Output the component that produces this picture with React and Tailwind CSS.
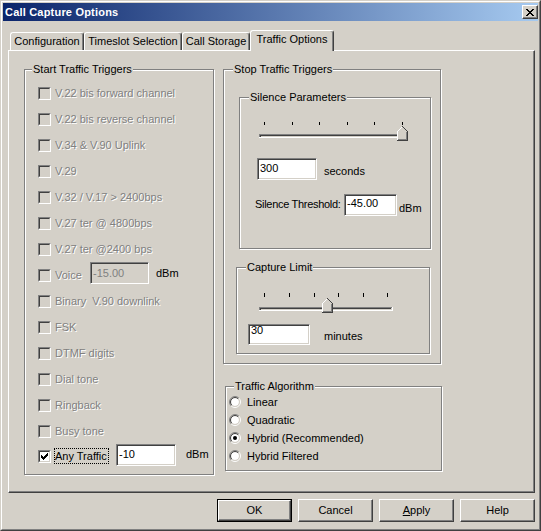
import React from "react";

function Checkbox({ checked, disabled }) {
  return (
    <div className="w-[13px] h-[13px] shrink-0 border border-t-[#808080] border-l-[#808080] border-r-white border-b-white">
      <div
        className={`w-full h-full flex items-center justify-center border border-t-[#404040] border-l-[#404040] border-r-[#d4d0c8] border-b-[#d4d0c8] ${
          disabled ? "bg-[#d4d0c8]" : "bg-white"
        }`}
      >
        {checked && (
          <svg width="7" height="7" className="block" shapeRendering="crispEdges">
            <path
              d="M0 2h1v3H0z M1 3h1v3H1z M2 4h1v3H2z M3 3h1v3H3z M4 2h1v3H4z M5 1h1v3H5z M6 0h1v3H6z"
              fill="#000"
            />
          </svg>
        )}
      </div>
    </div>
  );
}

function Radio({ checked }) {
  const arc = (r) => {
    const d = r * 0.7071;
    return {
      tl: `M${6 - d},${6 + d} A${r},${r} 0 0 1 ${6 + d},${6 - d}`,
      br: `M${6 + d},${6 - d} A${r},${r} 0 0 1 ${6 - d},${6 + d}`,
    };
  };
  const o = arc(5.5);
  const i = arc(4.5);
  return (
    <svg width="12" height="12" className="block shrink-0">
      <circle cx="6" cy="6" r="4" fill="#fff" />
      <path d={o.tl} stroke="#808080" fill="none" />
      <path d={o.br} stroke="#fff" fill="none" />
      <path d={i.tl} stroke="#404040" fill="none" />
      <path d={i.br} stroke="#d4d0c8" fill="none" />
      {checked && <circle cx="6" cy="6" r="2" fill="#000" />}
    </svg>
  );
}

function Field({ className, children }) {
  return (
    <div
      className={`shrink-0 border border-t-[#808080] border-l-[#808080] border-r-white border-b-white shadow-[inset_1px_1px_0_#404040,inset_-1px_-1px_0_#d4d0c8] pl-[2px] whitespace-nowrap ${className}`}
    >
      {children}
    </div>
  );
}

function Group({ label, labelLeft, className, children }) {
  return (
    <div
      className={`relative shrink-0 flex flex-col items-start border border-[#808080] shadow-[inset_1px_1px_0_#fff,1px_1px_0_#fff] ${className}`}
    >
      <span className={`absolute -top-[7px] ${labelLeft} px-[1px] bg-[#d4d0c8] whitespace-nowrap`}>
        {label}
      </span>
      {children}
    </div>
  );
}

function Slider({ ticks, tickY, tickH, x1, x2, cy, cx, ay, height }) {
  return (
    <svg width="160" height={height} className="block shrink-0" shapeRendering="crispEdges">
      {ticks.map((t) => (
        <rect key={t} x={t} y={tickY} width="1" height={tickH} fill="#000" />
      ))}
      <rect x={x1} y={cy} width={x2 - x1} height="1" fill="#808080" />
      <rect x={x1} y={cy} width="1" height="3" fill="#808080" />
      <rect x={x1 + 1} y={cy + 1} width={x2 - x1 - 2} height="1" fill="#404040" />
      <rect x={x1 + 1} y={cy + 1} width="1" height="2" fill="#404040" />
      <rect x={x1} y={cy + 3} width={x2 - x1 + 1} height="1" fill="#fff" />
      <rect x={x2} y={cy} width="1" height="4" fill="#fff" />
      <polygon
        points={`${cx - 5},${ay + 15} ${cx - 5},${ay + 5} ${cx},${ay} ${cx + 6},${ay + 6} ${cx + 6},${ay + 15}`}
        fill="#d4d0c8"
      />
      <polyline
        points={`${cx - 4.5},${ay + 14} ${cx - 4.5},${ay + 5.5} ${cx + 0.5},${ay + 0.5}`}
        fill="none"
        stroke="#fff"
      />
      <polyline
        points={`${cx + 0.5},${ay + 0.5} ${cx + 5.5},${ay + 5.5} ${cx + 5.5},${ay + 14.5} ${cx - 5},${ay + 14.5}`}
        fill="none"
        stroke="#404040"
      />
      <polyline
        points={`${cx + 4.5},${ay + 6} ${cx + 4.5},${ay + 13.5} ${cx - 4},${ay + 13.5}`}
        fill="none"
        stroke="#808080"
      />
    </svg>
  );
}

function Tab({ label, className, selected }) {
  return (
    <div
      className={`shrink-0 text-center whitespace-nowrap pt-[2px] border-t border-l border-r border-t-white border-l-white border-r-[#404040] shadow-[inset_-1px_0_0_#808080] rounded-t-[3px] ${
        selected ? "h-[21px] relative z-10 bg-[#d4d0c8]" : "h-[19px]"
      } ${className}`}
    >
      {label}
    </div>
  );
}

function Btn({ children, def }) {
  const inner = (
    <div className="w-full h-full flex items-center justify-center border border-t-white border-l-white border-r-[#404040] border-b-[#404040] shadow-[inset_-1px_-1px_0_#808080]">
      {children}
    </div>
  );
  return def ? (
    <div className="w-[75px] h-[23px] border border-black">{inner}</div>
  ) : (
    <div className="w-[75px] h-[23px]">{inner}</div>
  );
}

const dis = "ml-[4px] text-[#808080] [text-shadow:1px_1px_0_#ffffff] whitespace-pre";

const simpleRows1 = [
  "V.22 bis forward channel",
  "V.22 bis reverse channel",
  "V.34 & V.90 Uplink",
  "V.29",
  "V.32 / V.17 > 2400bps",
  "V.27 ter @ 4800bps",
  "V.27 ter @2400 bps",
];
const simpleRows2 = ["Binary  V.90 downlink", "FSK", "DTMF digits", "Dial tone", "Ringback", "Busy tone"];

export default function App() {
  return (
    <div className="w-[541px] h-[531px] bg-[#d4d0c8] text-black text-[11px] leading-[13px] font-['Liberation_Sans',Arial,sans-serif] border border-t-[#d4d0c8] border-l-[#d4d0c8] border-r-[#404040] border-b-[#404040]">
      <div className="h-full flex flex-col p-[1px] border border-t-white border-l-white border-r-[#808080] border-b-[#808080]">
        {/* Title bar */}
        <div className="h-[18px] shrink-0 flex items-center justify-between bg-[linear-gradient(to_right,#0a246a,#a6caf0)]">
          <span className="pl-[2px] text-white font-bold text-[11px] tracking-[0.2px]">Call Capture Options</span>
          <div className="w-[16px] h-[14px] flex items-center justify-center bg-[#d4d0c8] border border-t-white border-l-white border-r-[#404040] border-b-[#404040] shadow-[inset_-1px_-1px_0_#808080]">
            <svg width="8" height="7" className="block" shapeRendering="crispEdges">
              <path
                d="M0 0h2v1H0z M6 0h2v1H6z M1 1h2v1H1z M5 1h2v1H5z M2 2h4v1H2z M3 3h2v1H3z M2 4h4v1H2z M1 5h2v1H1z M5 5h2v1H5z M0 6h2v1H0z M6 6h2v1H6z"
                fill="#000"
              />
            </svg>
          </div>
        </div>

        {/* Tabs + panel */}
        <div className="ml-[5px] w-[527px] flex flex-col">
          <div className="mt-[9px] h-[21px] flex items-end pl-[2px]">
            <Tab label="Configuration" className="w-[74px]" />
            <Tab label="Timeslot Selection" className="w-[98px]" />
            <Tab label="Call Storage" className="w-[68px]" />
            <Tab label="Traffic Options" className="w-[84px]" selected />
          </div>
          <div className="-mt-[1px] h-[443px] w-[527px] flex items-start pl-[15px] pt-[18px] border border-t-white border-l-white border-r-[#404040] border-b-[#404040] shadow-[inset_-1px_-1px_0_#808080]">
            {/* Start Traffic Triggers */}
            <Group label="Start Traffic Triggers" labelLeft="left-[7px]" className="w-[190px] h-[406px] pt-[10px] pl-[13px]">
              {simpleRows1.map((t) => (
                <div key={t} className="flex items-center h-[26px]">
                  <Checkbox disabled />
                  <span className={dis}>{t}</span>
                </div>
              ))}
              <div className="flex items-center h-[26px]">
                <Checkbox disabled />
                <span className={`${dis} w-[35px]`}>Voice</span>
                <Field className="self-start w-[59px] h-[22px] pt-[4px] bg-[#d4d0c8] text-[#808080]">-15.00</Field>
                <span className="self-start ml-[7px] mt-[5px]">dBm</span>
              </div>
              {simpleRows2.map((t) => (
                <div key={t} className="flex items-center h-[26px]">
                  <Checkbox disabled />
                  <span className={dis}>{t}</span>
                </div>
              ))}
              <div className="flex items-center h-[24px]">
                <Checkbox checked />
                <span className="ml-[3px] w-[55px] leading-[14px] border border-dotted border-black whitespace-nowrap">
                  Any Traffic
                </span>
                <Field className="self-start ml-[7px] w-[60px] h-[22px] pt-[3px] bg-white">-10</Field>
                <span className="self-start ml-[10px] mt-[4px]">dBm</span>
              </div>
            </Group>

            {/* Right column */}
            <div className="ml-[9px] flex flex-col items-start">
              <Group label="Stop Traffic Triggers" labelLeft="left-[9px]" className="w-[218px] h-[295px]">
                <Group label="Silence Parameters" labelLeft="left-[9px]" className="ml-[15px] mt-[27px] w-[192px] h-[152px]">
                  <div className="ml-[15px] mt-[22px]">
                    <Slider
                      ticks={[9, 37, 64, 92, 119, 147]}
                      tickY={2}
                      tickH={3}
                      x1={4}
                      x2={152}
                      cy={14}
                      cx={147}
                      ay={6}
                      height={22}
                    />
                  </div>
                  <div className="ml-[17px] mt-[16px] flex items-start">
                    <Field className="w-[60px] h-[22px] pt-[3px] bg-white">300</Field>
                    <span className="ml-[7px] mt-[7px]">seconds</span>
                  </div>
                  <div className="ml-[15px] mt-[14px] flex items-start">
                    <span className="w-[89px] mt-[4px] whitespace-nowrap tracking-[-0.3px]">Silence Threshold:</span>
                    <Field className="w-[53px] h-[22px] pt-[2px] bg-white">-45.00</Field>
                    <span className="ml-[2px] mt-[8px]">dBm</span>
                  </div>
                </Group>
                <Group label="Capture Limit" labelLeft="left-[9px]" className="ml-[12px] mt-[18px] w-[194px] h-[87px]">
                  <div className="ml-[18px] mt-[23px]">
                    <Slider
                      ticks={[9, 34, 59, 83, 108, 132]}
                      tickY={2}
                      tickH={4}
                      x1={4}
                      x2={137}
                      cy={16}
                      cx={72}
                      ay={7}
                      height={23}
                    />
                  </div>
                  <div className="ml-[11px] mt-[10px] flex items-start">
                    <Field className="w-[62px] h-[21px] leading-[11px] pt-0 bg-white">30</Field>
                    <span className="ml-[14px] mt-[6px]">minutes</span>
                  </div>
                </Group>
              </Group>

              <Group label="Traffic Algorithm" labelLeft="left-[8px]" className="ml-[2px] mt-[22px] w-[217px] h-[85px] pt-[6px] pl-[3px]">
                {["Linear", "Quadratic", "Hybrid (Recommended)", "Hybrid Filtered"].map((t, i) => (
                  <div key={t} className="flex items-center h-[18px]">
                    <Radio checked={i === 2} />
                    <span className="ml-[6px] whitespace-nowrap">{t}</span>
                  </div>
                ))}
              </Group>
            </div>
          </div>

          {/* Buttons */}
          <div className="mt-[6px] flex justify-end gap-[6px]">
            <Btn def>OK</Btn>
            <Btn>Cancel</Btn>
            <Btn>
              <span>
                <span className="underline underline-offset-[1px]">A</span>pply
              </span>
            </Btn>
            <Btn>Help</Btn>
          </div>
        </div>
      </div>
    </div>
  );
}
